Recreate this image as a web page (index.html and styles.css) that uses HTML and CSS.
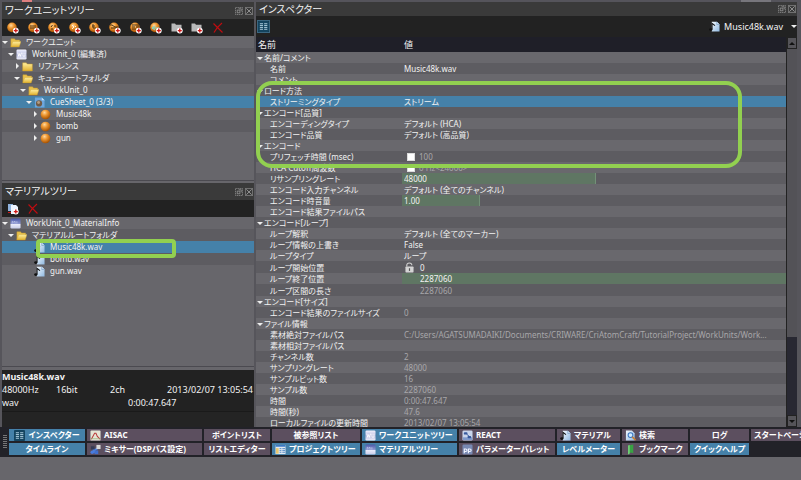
FILE: index.html
```html
<!DOCTYPE html>
<html lang="ja">
<head>
<meta charset="utf-8">
<title>CRI Atom Craft</title>
<link rel="stylesheet" href="styles.css">
</head>
<body>
<svg class="defs" aria-hidden="true">
  <defs>
    <radialGradient id="orange" cx=".4" cy=".3" r=".7"><stop offset="0" stop-color="#ffd9a0"/><stop offset=".4" stop-color="#f09a35"/><stop offset="1" stop-color="#a34f00"/></radialGradient>
    <linearGradient id="gold" x2="0" y2="1"><stop offset="0" stop-color="#fff0a0"/><stop offset="1" stop-color="#e0b030"/></linearGradient>
    <linearGradient id="sheet" x2="1" y2="1"><stop offset="0" stop-color="#f4faff"/><stop offset="1" stop-color="#8fb8e0"/></linearGradient>
    <linearGradient id="unit" x2="0" y2="1"><stop offset="0" stop-color="#f4f4ff"/><stop offset=".5" stop-color="#b4b9de"/><stop offset="1" stop-color="#f0f0fa"/></linearGradient>
    <linearGradient id="mat" x2="0" y2="1"><stop offset="0" stop-color="#4a58a8"/><stop offset=".5" stop-color="#8c96d0"/><stop offset=".6" stop-color="#e8eafa"/><stop offset="1" stop-color="#c8cce8"/></linearGradient>
  </defs>
  <symbol id="plus" viewBox="0 0 12 12"><circle cx="8.8" cy="8.6" r="2.9" fill="#fff"/><path d="M8.8 6.6v4M6.8 8.6h4" stroke="#d01818" stroke-width="1.4"/></symbol>
  <symbol id="ball" viewBox="0 0 12 12"><circle cx="6" cy="6" r="5.3" fill="url(#orange)"/></symbol>
  <symbol id="cue" viewBox="0 0 12 12"><circle cx="5" cy="5.4" r="4.8" fill="url(#orange)"/></symbol>
  <symbol id="folder" viewBox="0 0 12 12"><path d="M.7 2h4l1 1.300h5.600v7.500H.7z" fill="url(#gold)" stroke="#c79a28" stroke-width=".5"/></symbol>
  <symbol id="open" viewBox="0 0 12 12"><path d="M1 10.500V2h4l1 1.300h4.500V5" fill="#e8c14e" stroke="#c79a28" stroke-width=".5"/><path d="M3 5h9l-2 5.800H.8z" fill="url(#gold)" stroke="#c79a28" stroke-width=".4"/></symbol>
  <symbol id="wu" viewBox="0 0 12 12"><rect x=".5" y=".5" width="11" height="11" rx="1.5" fill="url(#unit)"/><path d="M2 4l1 4 1-3 1 3 1-4M7.600 4v3q0 1 1.100 1t1.100-1V4" fill="none" stroke="#fff" stroke-width="1"/></symbol>
  <symbol id="mi" viewBox="0 0 12 12"><rect x=".5" y=".5" width="11" height="11" rx="1.5" fill="url(#mat)"/><path d="M2.500 6V3.500l1.500 1 1.500-1V6M7.500 3.500V6" fill="none" stroke="#cdd3f2" stroke-width=".7"/></symbol>
  <symbol id="note" viewBox="0 0 12 12"><path d="M3 .8h5.500l3 3v7.700H3z" fill="url(#sheet)"/><path d="M8.500.8v3h3" fill="#d2e5f8" stroke="#4d7cae" stroke-width=".5"/><path d="M3.300 9V2.500L6.500 5" fill="none" stroke="#111" stroke-width="1.200"/><ellipse cx="2" cy="9.400" rx="1.800" ry="1.500" fill="#111"/></symbol>
  <symbol id="cuesheet" viewBox="0 0 12 12"><path d="M1 .5h7.500l3 3v8H1z" fill="#6da7de"/><path d="M8.500.5v3h3" fill="#c5e0f6"/><circle cx="5.500" cy="7" r="3.400" fill="#705b47"/><circle cx="5" cy="6" r="1.600" fill="#b39b80"/></symbol>
  <symbol id="cross" viewBox="0 0 12 12"><path d="M1.500 1.500q4 4 9 9M10 1Q5 5 2 10.500" fill="none" stroke="#c00c10" stroke-width="1.200"/></symbol>
  <symbol id="gfolder" viewBox="0 0 12 12"><path d="M.5 1.500h3.500l1 1.200h5.500v6.800H.5z" fill="#b9b9b9"/></symbol>
  <symbol id="grid" viewBox="0 0 12 12"><rect width="12" height="12" rx="1" fill="#14445f"/><path d="M2 3h3.500M2 5h3.500M2 7h3.500M2 9h3.500M6.700 3h3.500M6.700 5h3.500M6.700 7h3.500M6.700 9h3.500" stroke="#b9d8e8" stroke-width="1"/></symbol>
  <symbol id="dockfloat" viewBox="0 0 9 9"><rect x=".5" y=".5" width="8" height="8" fill="none" stroke="#8a8a8a" stroke-dasharray="1.500 .8"/><rect x="2.500" y="3.500" width="3" height="3" fill="none" stroke="#8a8a8a"/><path d="M4 2h3v3" fill="none" stroke="#8a8a8a"/></symbol>
  <symbol id="dockclose" viewBox="0 0 9 9"><rect x=".5" y=".5" width="8" height="8" fill="none" stroke="#777"/><path d="M1.500 1.500l6 6M7.500 1.500l-6 6" stroke="#999"/></symbol>
  <symbol id="lock" viewBox="0 0 10 12"><path d="M2 5V3.500Q2 1 4.800 1T7.600 3.500" fill="none" stroke="#cfcfcf" stroke-width="1.300"/><rect x=".5" y="5" width="9" height="6.500" rx=".8" fill="#d4d4d4"/><path d="M5 6.800v3" stroke="#555" stroke-width="1.300"/></symbol>
  <symbol id="aisac" viewBox="0 0 12 12"><rect x=".5" y=".5" width="11" height="11" rx="1" fill="#e5e5d5"/><path d="M1.500 10L5 3.500h1.500L8 7l3 3" fill="none" stroke="#b83a3a" stroke-width="1.100"/><path d="M1 9.500h10" stroke="#8fae74" stroke-width=".7"/></symbol>
  <symbol id="mixer" viewBox="0 0 12 12"><path d="M2 9l7-5M3 4l3 6" stroke="#4f83e0" stroke-width="2"/><rect x="1" y="2.500" width="4" height="3.500" fill="#333a55"/><rect x="7" y="1" width="4.500" height="4.500" fill="#d8d8d8"/><rect x="5" y="7" width="4" height="4" fill="#3f6fce"/><circle cx="2.500" cy="9" r="2" fill="#477be0"/></symbol>
  <symbol id="project" viewBox="0 0 12 12"><rect x=".5" y="1" width="11" height="10" fill="#dfe9f2"/><path d="M.5 2h11" stroke="#3b79c4" stroke-width="2"/><path d="M1 4.500h3v6H1z" fill="#e9c870"/><path d="M5 5h2M5 7h2M5 9h2M8 5h3M8 7h3M8 9h3" stroke="#4e86c4" stroke-width="1"/></symbol>
  <symbol id="react" viewBox="0 0 12 12"><rect x=".5" y=".5" width="11" height="11" rx="1.500" fill="#c9d6ec"/><path d="M1 8h10v3H1z" fill="#7f9acb"/><rect x="2" y="2.500" width="4" height="2.500" rx="1" fill="#36599c"/><rect x="6" y="6.500" width="4" height="2.500" rx="1" fill="#36599c"/><path d="M5 4.500l3 2.500" stroke="#36599c"/></symbol>
  <symbol id="pp" viewBox="0 0 12 12"><rect x=".5" y=".5" width="11" height="11" rx="1.500" fill="#7889b2"/><path d="M2.500 10V5.500H4q1.500 0 1.500 1.300T4 8.200H2.500M7 10V5.500h1.500Q10 5.500 10 6.800T8.500 8.200H7" fill="none" stroke="#f2f4ff" stroke-width="1.200"/></symbol>
  <symbol id="search" viewBox="0 0 12 12"><path d="M1 .5h6.500l3 3v8H1z" fill="url(#sheet)"/><circle cx="6" cy="5.500" r="2.600" fill="#cfeaff" stroke="#3974c0" stroke-width="1.100"/><path d="M8 7.500l3.500 3.700" stroke="#c98032" stroke-width="1.700"/></symbol>
  <symbol id="book" viewBox="0 0 12 12"><path d="M3.500 1.500L9 .5v9.500l-2.500-.8-3 2.300z" fill="#39a244"/><path d="M3.500 1.500L5 1.200v9.100l-1.500 1.200z" fill="#7fdc84"/></symbol>
</svg>

<div class="remnant" aria-hidden="true"><i class="red"></i><i class="tab"></i></div>

<main class="workspace">
  <div class="side">
    <section class="panel works">
      <header class="title"><h2>ワークユニットツリー</h2><span class="wbtns"><button aria-label="フロート"><svg><use href="#dockfloat"/></svg></button><button aria-label="閉じる"><svg><use href="#dockclose"/></svg></button></span></header>
      <div class="tools spread">
        <button aria-label="キュー"><svg><use href="#cue"/><use href="#plus"/></svg></button>
        <button aria-label="ポリフォニック"><svg><use href="#cue"/><path d="M2 4h6M2 6h6" stroke="#4a2c08"/><use href="#plus"/></svg></button>
        <button aria-label="シーケンシャル"><svg><use href="#cue"/><path d="M3 5l1.500-2M6 4h2M3 7h2" stroke="#4a2c08"/><use href="#plus"/></svg></button>
        <button aria-label="シャッフル"><svg><use href="#cue"/><path d="M3 3l2 2-2 2M6 4l1 1" stroke="#fff2dd" fill="none"/><use href="#plus"/></svg></button>
        <button aria-label="ランダム"><svg><use href="#cue"/><path d="M4 2v4h3M3 4h3" stroke="#4a2c08" fill="none"/><use href="#plus"/></svg></button>
        <button aria-label="スイッチ"><svg><use href="#cue"/><path d="M1 3h2l3 2h3M2 6h6" stroke="#4a2c08" fill="none"/><use href="#plus"/></svg></button>
        <button aria-label="コンボ"><svg><use href="#cue"/><path d="M2 3h7M2 5h3M6 5h3M2 7h4" stroke="#4a2c08"/><use href="#plus"/></svg></button>
        <button aria-label="トラック"><svg><use href="#cue"/><path d="M2 6h7M5 4l-3 2 3 2" stroke="#78d8d0" fill="none"/><use href="#plus"/></svg></button>
        <button aria-label="フォルダー"><svg><use href="#gfolder"/><use href="#plus"/></svg></button>
        <button aria-label="サブフォルダー"><svg><use href="#gfolder"/><use href="#plus"/></svg></button>
        <button aria-label="削除"><svg><use href="#cross"/></svg></button>
      </div>
      <ul class="tree">
        <li class="l0"><i class="down"></i><svg><use href="#open"/></svg><span>ワークユニット</span></li>
        <li class="l1"><i class="down"></i><svg><use href="#wu"/></svg><span>WorkUnit_0 (編集済)</span></li>
        <li class="l2"><i class="right"></i><svg><use href="#folder"/></svg><span>リファレンス</span></li>
        <li class="l2"><i class="down"></i><svg><use href="#open"/></svg><span>キューシートフォルダ</span></li>
        <li class="l3"><i class="down"></i><svg><use href="#open"/></svg><span>WorkUnit_0</span></li>
        <li class="l4 sel"><i class="down"></i><svg><use href="#cuesheet"/></svg><span>CueSheet_0 (3/3)</span></li>
        <li class="l5"><i class="right"></i><svg><use href="#ball"/></svg><span>Music48k</span></li>
        <li class="l5"><i class="right"></i><svg><use href="#ball"/></svg><span>bomb</span></li>
        <li class="l5"><i class="right"></i><svg><use href="#ball"/></svg><span>gun</span></li>
      </ul>
    </section>
    <section class="panel materials">
      <header class="title"><h2>マテリアルツリー</h2><span class="wbtns"><button aria-label="フロート"><svg><use href="#dockfloat"/></svg></button><button aria-label="閉じる"><svg><use href="#dockclose"/></svg></button></span></header>
      <div class="tools">
        <button aria-label="マテリアルの追加"><svg><path d="M1 1h5v7H1z" fill="#8fb2dc"/><path d="M4 2h5l2 2v7H4z" fill="#edf4ff"/><path d="M1 9.500h3" stroke="#d01818"/><use href="#plus"/></svg></button>
        <button aria-label="削除"><svg><use href="#cross"/></svg></button>
      </div>
      <ul class="tree">
        <li class="l0"><i class="down"></i><svg><use href="#mi"/></svg><span>WorkUnit_0_MaterialInfo</span></li>
        <li class="l1"><i class="down"></i><svg><use href="#open"/></svg><span>マテリアルルートフォルダ</span></li>
        <li class="l4 sel"><i></i><svg><use href="#note"/></svg><span>Music48k.wav</span><b class="mark"></b></li>
        <li class="l4"><i></i><svg><use href="#note"/></svg><span>bomb.wav</span></li>
        <li class="l4"><i></i><svg><use href="#note"/></svg><span>gun.wav</span></li>
      </ul>
    </section>
    <section class="info">
      <strong>Music48k.wav</strong>
      <div class="facts"><span>48000Hz</span><span>16bit</span><span>2ch</span><span class="end">2013/02/07 13:05:54</span></div>
      <div class="facts two"><span>wav</span><span>0:00:47.647</span></div>
    </section>
  </div>

  <section class="inspector">
    <header class="title"><h2>インスペクター</h2><span class="wbtns"><button aria-label="フロート"><svg><use href="#dockfloat"/></svg></button><button aria-label="閉じる"><svg><use href="#dockclose"/></svg></button></span></header>
    <div class="tools">
      <button class="list" aria-label="リスト表示"><svg><use href="#grid"/></svg></button>
      <span class="target"><svg><use href="#note"/></svg>Music48k.wav</span><i class="down"></i>
    </div>
    <div class="sheet">
      <table>
        <colgroup><col class="cname"><col></colgroup>
        <thead><tr><th>名前</th><th>値</th></tr></thead>
        <tbody>
          <tr class="g"><td colspan="2"><i class="down"></i>名前/コメント</td></tr>
          <tr><td>名前</td><td>Music48k.wav</td></tr>
          <tr><td>コメント</td><td></td></tr>
          <tr class="g"><td colspan="2"><i class="down"></i>ロード方法</td></tr>
          <tr class="sel"><td>ストリーミングタイプ</td><td>ストリーム</td></tr>
          <tr class="g"><td colspan="2"><i class="down"></i>エンコード[品質]</td></tr>
          <tr><td>エンコーディングタイプ</td><td>デフォルト (HCA)</td></tr>
          <tr><td>エンコード品質</td><td>デフォルト (高品質)</td></tr>
          <tr class="g"><td colspan="2"><i class="down"></i>エンコード</td></tr>
          <tr><td><label for="pf">プリフェッチ時間 (msec)</label></td><td class="off"><input type="checkbox" id="pf">100</td></tr>
          <tr><td><label for="hc">HCA Cutoff周波数</label></td><td class="off"><input type="checkbox" id="hc">0 Hz&lt;24000&gt;</td></tr>
          <tr><td><label for="rs">リサンプリングレート</label></td><td><input class="bar half" id="rs" value="48000"></td></tr>
          <tr><td>エンコード入力チャンネル</td><td>デフォルト (全てのチャンネル)</td></tr>
          <tr><td><label for="vol">エンコード時音量</label></td><td><input class="bar fifth" id="vol" value="1.00"></td></tr>
          <tr><td>エンコード結果ファイルパス</td><td></td></tr>
          <tr class="g"><td colspan="2"><i class="down"></i>エンコード[ループ]</td></tr>
          <tr><td>ループ解釈</td><td>デフォルト (全てのマーカー)</td></tr>
          <tr><td>ループ情報の上書き</td><td>False</td></tr>
          <tr><td>ループタイプ</td><td>ループ</td></tr>
          <tr class="tall"><td>ループ開始位置</td><td><svg class="lock"><use href="#lock"/></svg>0</td></tr>
          <tr><td><label for="le">ループ終了位置</label></td><td><input class="bar deep" id="le" value="2287060"></td></tr>
          <tr class="tall"><td>ループ区間の長さ</td><td class="off deep">2287060</td></tr>
          <tr class="g"><td colspan="2"><i class="down"></i>エンコード[サイズ]</td></tr>
          <tr><td>エンコード結果のファイルサイズ</td><td class="off">0</td></tr>
          <tr class="g"><td colspan="2"><i class="down"></i>ファイル情報</td></tr>
          <tr><td>素材絶対ファイルパス</td><td class="off">C:/Users/AGATSUMADAIKI/Documents/CRIWARE/CriAtomCraft/TutorialProject/WorkUnits/Work...</td></tr>
          <tr><td>素材相対ファイルパス</td><td></td></tr>
          <tr><td>チャンネル数</td><td class="off">2</td></tr>
          <tr><td>サンプリングレート</td><td class="off">48000</td></tr>
          <tr><td>サンプルビット数</td><td class="off">16</td></tr>
          <tr><td>サンプル数</td><td class="off">2287060</td></tr>
          <tr><td>時間</td><td class="off">0:00:47.647</td></tr>
          <tr><td>時間(秒)</td><td class="off">47.6</td></tr>
          <tr><td>ローカルファイルの更新時間</td><td class="off">2013/02/07 13:05:54</td></tr>
        </tbody>
      </table>
      <div class="scroll" aria-hidden="true"><i class="cap up"></i><i class="thumb"></i><i class="cap dn"></i></div>
      <b class="mark"></b>
    </div>
  </section>
</main>

<nav class="dock" aria-label="ウィンドウ">
  <span class="grip"></span>
  <div class="buttons">
    <button class="on"><svg><use href="#grid"/></svg>インスペクター</button>
    <button class="lead"><svg><use href="#aisac"/></svg>AISAC</button>
    <button>ポイントリスト</button>
    <button>被参照リスト</button>
    <button class="on lead"><svg><use href="#wu"/></svg>ワークユニットツリー</button>
    <button class="lead"><svg><use href="#react"/></svg>REACT</button>
    <button class="lead"><svg><use href="#note"/></svg>マテリアル</button>
    <button class="lead"><svg><use href="#search"/></svg>検索</button>
    <button>ログ</button>
    <button class="lead">スタートページ</button>
    <button class="on">タイムライン</button>
    <button class="lead"><svg><use href="#mixer"/></svg>ミキサー(DSPバス設定)</button>
    <button>リストエディター</button>
    <button class="on lead"><svg><use href="#project"/></svg>プロジェクトツリー</button>
    <button class="on lead"><svg><use href="#mi"/></svg>マテリアルツリー</button>
    <button class="lead"><svg><use href="#pp"/></svg>パラメーターパレット</button>
    <button class="on">レベルメーター</button>
    <button class="lead"><svg><use href="#book"/></svg>ブックマーク</button>
    <button class="on">クイックヘルプ</button>
  </div>
</nav>
</body>
</html>
```
FILE: styles.css
```css
*, *::before { box-sizing: border-box; }
html, body { height: 100%; }
body {
  margin: 0;
  display: flex;
  flex-direction: column;
  overflow: hidden;
  background: #67666b;
  color: #f2f2f2;
  font: 8px/11px "Noto Sans", "Noto Sans CJK JP", sans-serif;
  font-feature-settings: "palt";
  white-space: nowrap;
}
.defs { position: absolute; width: 0; height: 0; }
svg { width: 12px; height: 12px; flex: none; overflow: visible; }
button {
  margin: 0; padding: 0; border: 0; background: none;
  color: inherit; font: inherit; font-feature-settings: inherit;
  display: flex; align-items: center; justify-content: center;
}
h2 { margin: 0; font-size: 10px; font-weight: 400; }
ul { margin: 0; padding: 0; list-style: none; }

.remnant { height: 2px; flex: none; background: #55545b; display: flex; }
.remnant .red { width: 10px; margin-left: 22px; background: #e08080; }
.remnant .tab { width: 30px; margin-left: auto; margin-right: 30px; background: #77767c; }

.workspace { flex: none; height: 425px; display: flex; gap: 2px; padding: 0 4px 0 2px; background: #56555b; }
.side { flex: 0 0 252px; display: flex; flex-direction: column; background: #67666b; }
.panel { display: flex; flex-direction: column; border-bottom: 1px solid #4b4a50; }
.works { height: 179px; }
.materials { height: 184px; margin-top: 2px; }
.title { height: 17px; flex: none; display: flex; align-items: center; justify-content: space-between; padding: 0 1px 0 3px; background: #3a3a3a; }
.wbtns { display: flex; gap: 2px; }
.wbtns svg { width: 8px; height: 8px; }
.tools { height: 17px; flex: none; display: flex; align-items: center; gap: 8px; padding: 0 5px; background: #222; }
.spread { display: grid; grid-template-columns: repeat(11, 1fr); gap: 0; padding: 0 26px 0 1px; }

.tree { flex: 1; background: #67666b; }
.tree li { position: relative; display: flex; align-items: center; height: 12px; line-height: 12px; }
.tree li:nth-child(even) { background: #5d5c61; }
.tree li.sel { background: #4581a9; }
.tree svg { width: 11px; height: 11px; margin: 0 5px 0 2px; }
.tree i { width: 6px; flex: none; }
.l1 { padding-left: 6px; }
.tree .l2 { padding-left: 12px; }
.tree .l3 { padding-left: 18px; }
.tree .l4 { padding-left: 24px; }
.tree .l5 { padding-left: 30px; }
.down::before { content: ""; display: block; width: 6px; border: 3px solid transparent; border-top: 3px solid #eee; border-bottom: 0; }
.right::before { content: ""; display: block; width: 3px; margin-left: 2px; border: 3px solid transparent; border-left: 3px solid #eee; border-right: 0; }

.info { flex: 1; margin-top: 3px; background: linear-gradient(#222 41px, #1a1a1a 41px 42px, #242424 42px); font-size: 9px; line-height: 13px; }
.info strong { display: block; }
.facts { display: grid; grid-template-columns: 54px 54px 1fr auto; padding-right: 1px; }
.facts.two { grid-template-columns: 126px 1fr; }

.inspector { flex: 1; min-width: 0; display: flex; flex-direction: column; background: #222; }
.inspector .title { height: 14px; }
.inspector .tools { height: 20px; padding: 0 0 0 1px; }
.list { border: 1px solid #3b6680; }
.list svg { width: 11px; height: 11px; }
.target { display: flex; gap: 4px; align-items: center; margin-left: auto; font-size: 9px; }
.target svg { width: 11px; height: 11px; }
.sheet { position: relative; flex: 1; min-height: 0; display: flex; padding-top: 1px; overflow: hidden; }
.sheet > table { align-self: flex-start; }
table { flex: 1; min-width: 0; table-layout: fixed; border-collapse: collapse; }
.cname { width: 146px; }
td, th { padding: 0 0 0 2px; height: 11px; line-height: 11px; font-weight: 400; text-align: left; overflow: hidden; }
th { height: 15px; background: #1f1f28; font-size: 9px; }
tbody tr { background: #5d5c61; }
tbody tr:nth-child(odd) { background: #69686d; }
tbody tr.sel { background: #4581a9; }
.tall td { height: 12px; }
td:first-child { padding-left: 14px; }
.g td:first-child { padding-left: 1px; }
.g .down { display: inline-block; width: 6px; margin-right: 1px; vertical-align: 1px; }
.off { color: #a8a7aa; }
td.deep { padding-left: 18px; }
input[type=checkbox] { appearance: none; width: 8px; height: 8px; margin: 0 4px 0 3px; background: #fff; border: 1px solid #ddd; vertical-align: -1px; }
.bar { display: block; width: calc(100% + 2px); height: 11px; margin-left: -2px; padding: 0 0 0 2px; border: 0; color: inherit; font: inherit; background: #5f7663; }
.half { width: 194px; border-right: 1px solid #739078; }
.fifth { width: 78px; border-right: 1px solid #739078; }
input.deep { padding-left: 18px; }
.lock { width: 9px; height: 11px; margin: 0 6px 0 1px; vertical-align: -2px; }

.scroll { width: 11px; display: flex; flex-direction: column; background: #282832; border-left: 1px solid #222; }
.cap { height: 12px; background: #555459; border: 1px solid #222; display: flex; align-items: center; justify-content: center; }
.cap::before { content: ""; border: 3px solid transparent; }
.cap.up::before { border-bottom: 3px solid #111; border-top: 0; }
.cap.dn::before { border-top: 3px solid #111; border-bottom: 0; }
.thumb { flex: 1; margin-bottom: 78px; background: #535257; }

.mark { position: absolute; border: 4px solid #92d050; border-radius: 16px; }
.sheet .mark { left: 0; right: 55px; top: 45px; height: 87px; }
.tree .mark { left: 34px; width: 140px; top: -2px; height: 19px; border-radius: 4px; z-index: 1; }

.dock { flex: none; height: 30px; display: flex; align-items: center; background: #222228; overflow: hidden; }
.grip { width: 4px; height: 14px; margin: 0 2px 0 3px; background: repeating-linear-gradient(#777 0 1px, #222228 1px 2px); }
.buttons { flex: 1; display: grid; gap: 2px; grid-template-rows: 12px 12px;
  grid-template-columns: minmax(0, 76fr) minmax(0, 115fr) minmax(0, 66fr) minmax(0, 88fr) minmax(0, 95fr) minmax(0, 96fr) minmax(0, 63fr) minmax(0, 66fr) minmax(0, 59fr) minmax(0, 50fr); }
.buttons button { gap: 3px; overflow: hidden; background: #5c4f5f; font-size: 8px; line-height: 12px; font-weight: 700; color: #fff; }
.buttons .lead { justify-content: flex-start; padding-left: 3px; }
.buttons .on { background: #4581a9; }
.buttons svg { width: 11px; height: 11px; }
```
